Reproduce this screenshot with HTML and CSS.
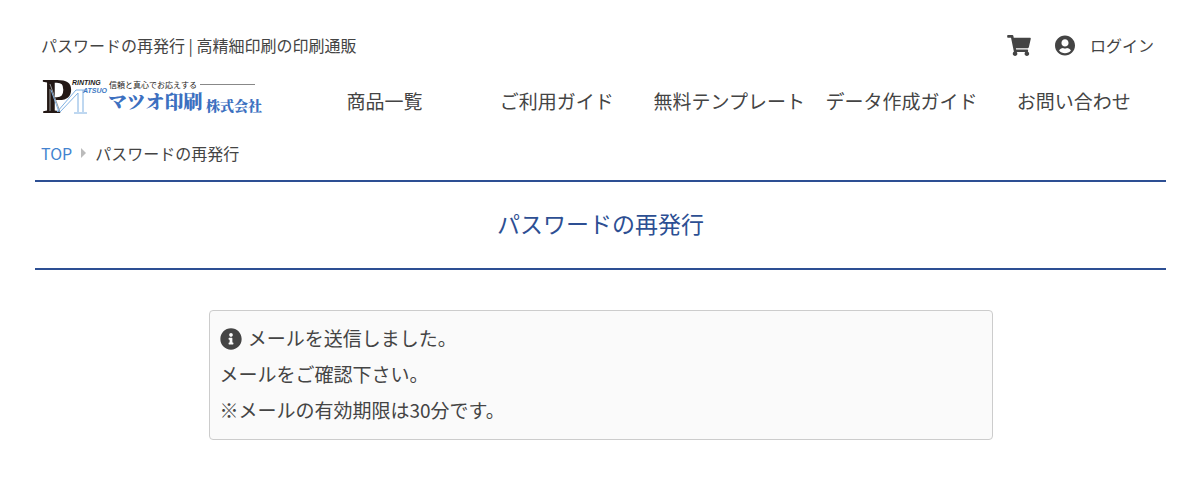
FILE: index.html
```html
<!DOCTYPE html>
<html lang="ja">
  <head>
    <meta charset="utf-8">
    <meta name="viewport" content="width=device-width, initial-scale=1">
    <title>パスワードの再発行 | 高精細印刷の印刷通販</title>
    <link rel="stylesheet" href="styles.css">
  </head>
  <body>
    <div class="container">
      <header>
        <div class="header-top">
          <p class="site-title">パスワードの再発行 | 高精細印刷の印刷通販</p>
          <div class="header-links">
            <a href="#" aria-label="カート">
              <svg class="icon-cart" viewBox="0 0 576 512"><path d="M528.12 301.319l47.273-208C578.806 78.301 567.391 64 551.99 64H159.208l-9.166-44.81C147.758 8.021 137.93 0 126.529 0H24C10.745 0 0 10.745 0 24v16c0 13.255 10.745 24 24 24h69.883l70.248 343.435C147.325 417.1 136 435.222 136 456c0 30.928 25.072 56 56 56s56-25.072 56-56c0-15.674-6.447-29.835-16.824-40h209.647C430.447 426.165 424 440.326 424 456c0 30.928 25.072 56 56 56s56-25.072 56-56c0-22.172-12.888-41.332-31.579-50.405l5.517-24.276c3.413-15.018-8.002-29.319-23.403-29.319H218.117l-6.545-32h293.145c11.206 0 20.92-7.754 23.403-18.681z"/></svg>
            </a>
            <a href="#" class="login">
              <svg class="icon-user" viewBox="0 0 496 512"><path d="M248 8C111 8 0 119 0 256s111 248 248 248 248-111 248-248S385 8 248 8zm0 96c48.600 0 88 39.400 88 88s-39.400 88-88 88-88-39.400-88-88 39.400-88 88-88zm0 344c-58.700 0-111.300-26.600-146.500-68.200 18.800-35.400 55.600-59.800 98.500-59.800 2.400 0 4.800.4 7.100 1.100 13 4.200 26.600 6.900 40.900 6.900 14.300 0 28-2.700 40.900-6.900 2.300-.7 4.700-1.100 7.100-1.100 42.900 0 79.700 24.400 98.500 59.800C359.300 421.400 306.700 448 248 448z"/></svg>
              <span>ログイン</span>
            </a>
          </div>
        </div>
        <div class="header-main">
          <a href="#" class="logo" aria-label="マツオ印刷株式会社">
            <svg viewBox="0 0 222 38">
              <text class="logo-p" x="1" y="35">P</text>
              <path class="mark-gray" d="M9 6L19 34M9 11V33"/>
              <path class="mark-blue" d="M16 34L35 12H45M19 34L37 15V34M10 12L18 34M42 12V34M33 35H46"/>
              <text class="logo-en" x="31" y="7">RINTING</text>
              <text class="logo-en logo-blue" x="42" y="15">ATSUO</text>
              <text class="logo-copy" x="68" y="10">信頼と真心でお応えする</text>
              <path class="logo-line" d="M159 6.500H214"/>
              <text class="logo-name" x="67" y="31">マツオ印刷</text>
              <text class="logo-corp" x="165" y="33">株式会社</text>
            </svg>
          </a>
          <nav>
            <a href="#">商品一覧</a>
            <a href="#">ご利用ガイド</a>
            <a href="#">無料テンプレート</a>
            <a href="#">データ作成ガイド</a>
            <a href="#">お問い合わせ</a>
          </nav>
        </div>
      </header>
      <div class="breadcrumb">
        <a href="#">TOP</a>
        <span class="arrow"></span>
        <span>パスワードの再発行</span>
      </div>
      <main>
        <h1>パスワードの再発行</h1>
        <div class="message">
          <p>
            <svg class="icon-info" viewBox="0 0 512 512"><path d="M256 8C119.043 8 8 119.083 8 256c0 136.997 111.043 248 248 248s248-111.003 248-248C504 119.083 392.957 8 256 8zm0 110c23.196 0 42 18.804 42 42s-18.804 42-42 42-42-18.804-42-42 18.804-42 42-42zm56 254c0 6.627-5.373 12-12 12h-88c-6.627 0-12-5.373-12-12v-24c0-6.627 5.373-12 12-12h12v-64h-12c-6.627 0-12-5.373-12-12v-24c0-6.627 5.373-12 12-12h64c6.627 0 12 5.373 12 12v100h12c6.627 0 12 5.373 12 12v24z"/></svg>
            メールを送信しました。
          </p>
          <p>メールをご確認下さい。</p>
          <p>※メールの有効期限は30分です。</p>
        </div>
      </main>
    </div>
  </body>
</html>
```
FILE: styles.css
```css
* {
  box-sizing: border-box;
}

body {
  margin: 0;
  background-color: #fff;
  color: #444;
  font-family: "Noto Sans CJK JP", sans-serif;
  font-size: 16px;
  line-height: 24px;
}

p {
  margin: 0;
}

a {
  color: inherit;
  text-decoration: none;
}

svg {
  fill: currentColor;
}

.container {
  padding: 33px 35px;
}

.header-top {
  display: flex;
  justify-content: space-between;
  align-items: center;
  padding: 0 12px 0 6px;
}

.header-links {
  display: flex;
  align-items: center;
  gap: 24px;
}

.header-links a {
  display: flex;
  align-items: center;
  gap: 15px;
}

.icon-cart {
  width: 24px;
  height: 21px;
}

.icon-user {
  width: 20px;
  height: 21px;
}

.header-main {
  display: flex;
  justify-content: space-between;
  align-items: center;
  padding: 21px 6px 0;
}

.logo svg {
  display: block;
  width: 222px;
  height: 38px;
  overflow: visible;
}

.logo-p {
  fill: #231815;
  font: bold 50px "Liberation Serif", serif;
}

.mark-gray, .mark-blue {
  fill: none;
  stroke: #999;
}

.mark-blue {
  stroke: #7fb0e2;
}

.logo-en {
  fill: #231815;
  font: italic bold 7px "Liberation Sans", sans-serif;
}

.logo-en.logo-blue {
  fill: #3c78c3;
}

.logo-copy {
  fill: #231815;
  font: 8px "Noto Sans CJK JP", sans-serif;
}

.logo-line {
  stroke: #888;
}

.logo-name, .logo-corp {
  fill: #3c70c0;
  font: 900 19px "Noto Serif CJK JP", "Noto Sans CJK JP", sans-serif;
}

.logo-corp {
  font-size: 14px;
}

nav {
  display: grid;
  grid-template-columns: repeat(5, 1fr);
  width: 77%;
  padding-top: 8px;
  font-size: 19px;
  text-align: center;
  white-space: nowrap;
}

.breadcrumb {
  display: flex;
  align-items: center;
  gap: 9px;
  padding: 25px 6px 15px;
}

.breadcrumb a {
  color: #4383cf;
}

.arrow {
  border: 5px solid transparent;
  border-left-color: #bbb;
  border-right: 0;
}

h1 {
  margin: 0 0 40px;
  padding: 23px 0 27px;
  border-top: 2px solid #2d4f93;
  border-bottom: 2px solid #2d4f93;
  color: #2d4f93;
  font-size: 23px;
  font-weight: 400;
  line-height: 36px;
  text-align: center;
}

.message {
  max-width: 784px;
  margin: 0 auto;
  padding: 9px 10px 11px;
  border: 1px solid #ccc;
  border-radius: 4px;
  background-color: #fafafa;
  font-size: 19px;
  line-height: 36px;
}

.icon-info {
  width: 22px;
  height: 22px;
  margin-right: 2px;
  vertical-align: -4px;
}
```
